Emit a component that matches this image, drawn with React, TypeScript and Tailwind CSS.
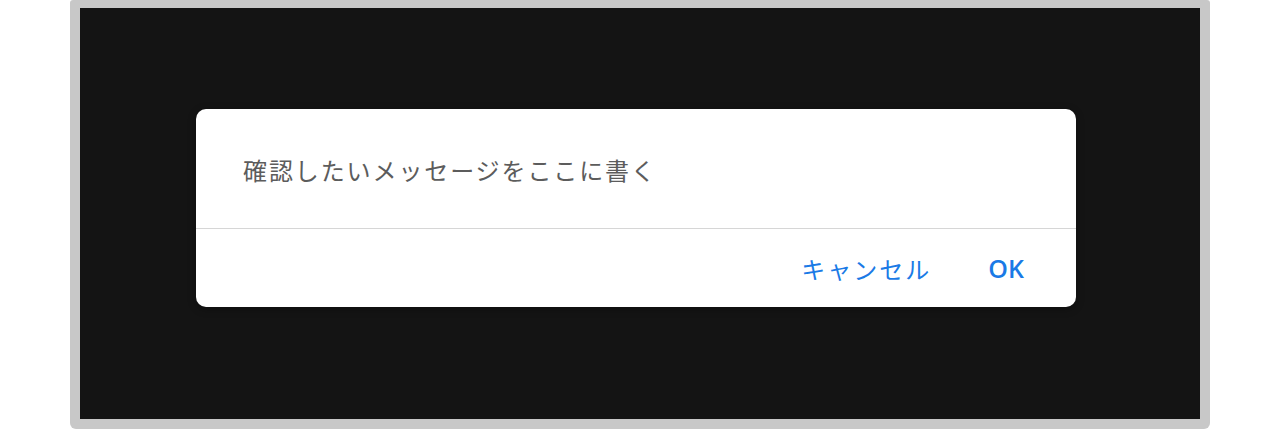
export default function App() {
  return (
    <div className="w-full h-[429px] bg-white flex">
      {/* device frame */}
      <div className="ml-[70px] w-[1140px] h-[429px] bg-[#c8c8c8] rounded-b-[6px] rounded-t-[3px] pt-[8px] px-[10px] pb-[10px] flex">
        <div className="flex-1 bg-[#141414] pt-[101px] pl-[116px]">
          {/* confirm dialog */}
          <div className="w-[880px] bg-white rounded-[10px] shadow-[0_2px_8px_rgba(0,0,0,0.3)] flex flex-col" style={{ fontFamily: '"Noto Sans CJK JP", "Noto Sans", sans-serif' }}>
            <div className="h-[119px] flex items-center pl-[47px] pt-[3px]">
              <p className="text-[24px] tracking-[1.9px] text-[#5c5c5c]">確認したいメッセージをここに書く</p>
            </div>
            <div className="h-px bg-[#d6d6d6]" />
            <div className="h-[78px] flex items-center justify-end pr-[52px] gap-[57px] pt-[2px]">
              <button className="text-[24px] tracking-[2px] text-[#1a7ae6]">キャンセル</button>
              <button className="text-[25px] font-semibold text-[#1a7ae6]" style={{ fontFamily: '"Open Sans", "Noto Sans", sans-serif' }}>OK</button>
            </div>
          </div>
        </div>
      </div>
    </div>
  );
}
